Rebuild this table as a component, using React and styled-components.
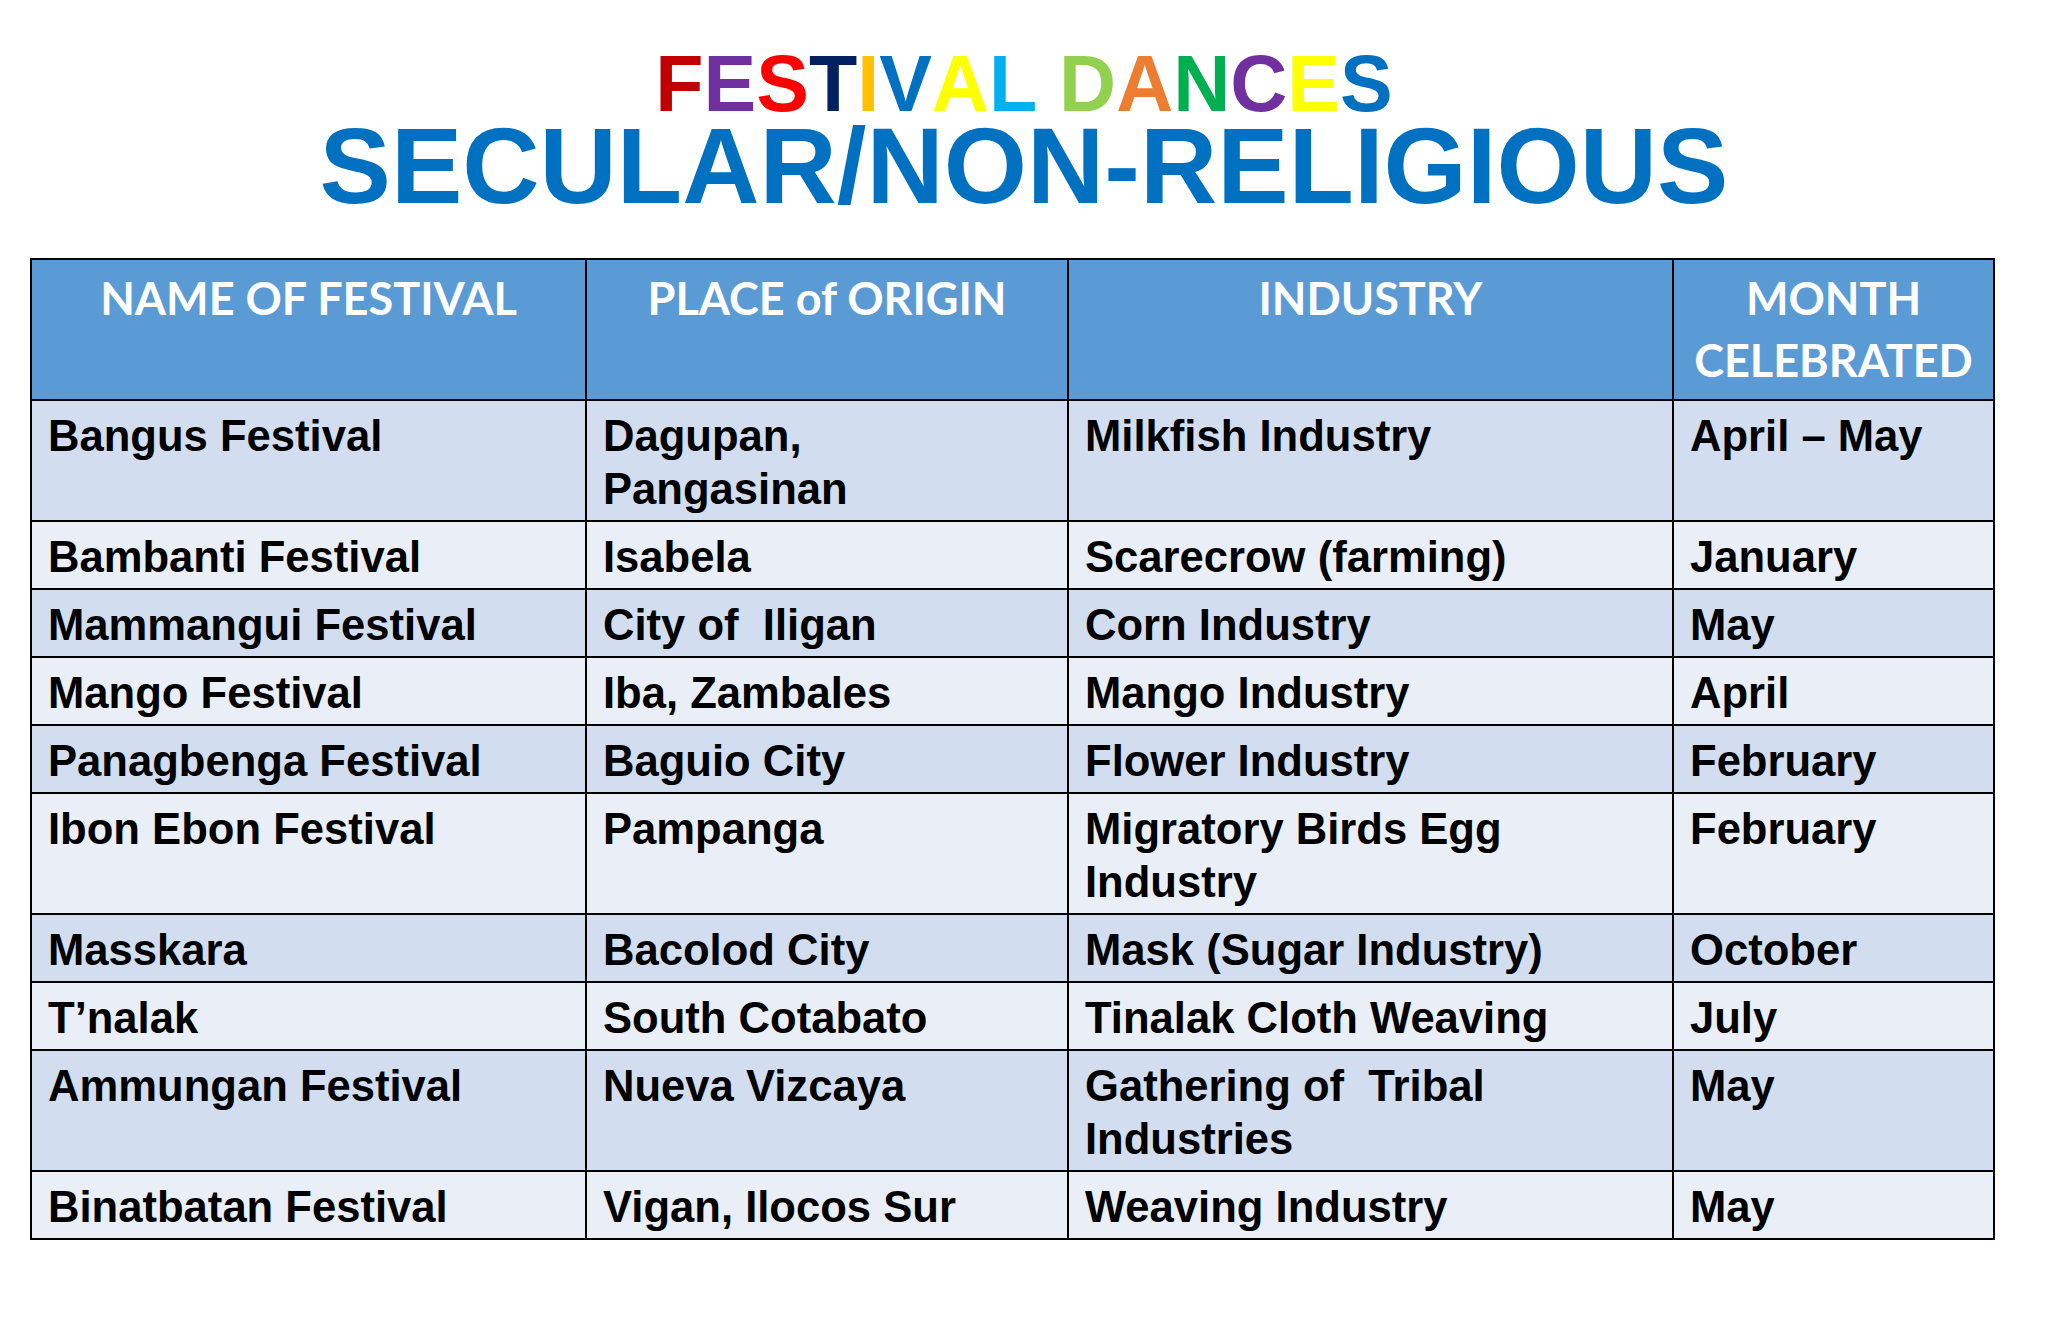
import { createGlobalStyle, styled } from 'styled-components';

// letters of the rainbow title, one colour each
const titleLetters = [
  ['F', '#c00000'],
  ['E', '#7030a0'],
  ['S', '#ff0000'],
  ['T', '#002060'],
  ['I', '#ffc000'],
  ['V', '#0070c0'],
  ['A', '#ffff00'],
  ['L', '#00b0f0'],
  [' ', 'transparent'],
  ['D', '#92d050'],
  ['A', '#ed7d31'],
  ['N', '#00b050'],
  ['C', '#7030a0'],
  ['E', '#ffff00'],
  ['S', '#0070c0'],
];

const columns = [
  { label: 'NAME OF FESTIVAL', width: 555 },
  { label: 'PLACE of ORIGIN', width: 482 },
  { label: 'INDUSTRY', width: 605 },
  { label: 'MONTH CELEBRATED', width: 321 },
];

const festivals = [
  ['Bangus Festival', 'Dagupan, Pangasinan', 'Milkfish Industry', 'April – May'],
  ['Bambanti Festival', 'Isabela', 'Scarecrow (farming)', 'January'],
  ['Mammangui Festival', 'City of  Iligan', 'Corn Industry', 'May'],
  ['Mango Festival', 'Iba, Zambales', 'Mango Industry', 'April'],
  ['Panagbenga Festival', 'Baguio City', 'Flower Industry', 'February'],
  ['Ibon Ebon Festival', 'Pampanga', 'Migratory Birds Egg Industry', 'February'],
  ['Masskara', 'Bacolod City', 'Mask (Sugar Industry)', 'October'],
  ['T’nalak', 'South Cotabato', 'Tinalak Cloth Weaving', 'July'],
  ['Ammungan Festival', 'Nueva Vizcaya', 'Gathering of  Tribal Industries', 'May'],
  ['Binatbatan Festival', 'Vigan, Ilocos Sur', 'Weaving Industry', 'May'],
];

const App = () => {
  return (
    <>
      <GlobalStyle />
      <Page>
        <Heading>
          <RainbowTitle>
            {titleLetters.map(([ch, color], idx) => (
              <Letter key={idx} $color={color}>
                {ch}
              </Letter>
            ))}
          </RainbowTitle>
          <SubTitle>SECULAR/NON-RELIGIOUS</SubTitle>
        </Heading>

        <TableWrap>
          <Table>
            <colgroup>
              {columns.map((col) => (
                <Col key={col.label} $width={col.width} />
              ))}
            </colgroup>
            <thead>
              <tr>
                {columns.map((col) => (
                  <HeadCell key={col.label}>{col.label}</HeadCell>
                ))}
              </tr>
            </thead>
            <tbody>
              {festivals.map((row, idx) => (
                <Row key={row[0]} $odd={idx % 2 === 0}>
                  {row.map((text, i) => (
                    <Cell key={i}>{text}</Cell>
                  ))}
                </Row>
              ))}
            </tbody>
          </Table>
        </TableWrap>
      </Page>
    </>
  );
};

const GlobalStyle = createGlobalStyle`
  body {
    margin: 0;
    background-color: #ffffff;
  }
`;

const Page = styled.div`
  width: 2048px;
  min-height: 1339px;
  box-sizing: border-box;
  padding-top: 52px;
  background-color: #ffffff;
`;

const Heading = styled.div`
  display: flex;
  flex-direction: column;
  align-items: center;
  font-family: 'Liberation Sans', Arial, sans-serif;
  font-weight: bold;
  margin-bottom: 42px;
`;

const RainbowTitle = styled.div`
  display: flex;
  justify-content: center;
  font-size: 79px;
  line-height: 64px;
  height: 64px;
  overflow: visible;
  white-space: pre;
`;

const Letter = styled.span`
  display: block;
  height: 64px;
  color: ${(props) => props.$color};
`;

const SubTitle = styled.div`
  font-size: 107px;
  line-height: 100px;
  color: #0070c0;
`;

const TableWrap = styled.div`
  padding-left: 30px;
`;

const Table = styled.table`
  width: 1963px;
  table-layout: fixed;
  border-collapse: collapse;
  border: 2px solid #000000;
`;

const Col = styled.col`
  width: ${(props) => props.$width}px;
`;

const HeadCell = styled.th`
  font-family: Lato, 'Open Sans', sans-serif;
  font-weight: bold;
  font-size: 45px;
  line-height: 62px;
  color: #ffffff;
  background-color: #5b9bd5;
  border: 2px solid #000000;
  padding: 7px 16px 8px;
  text-align: center;
  vertical-align: top;
`;

const Row = styled.tr`
  background-color: ${(props) => (props.$odd ? '#d2deef' : '#eaeff7')};
`;

const Cell = styled.td`
  font-family: 'Liberation Sans', Arial, sans-serif;
  font-weight: bold;
  font-size: 43.6px;
  line-height: 53px;
  color: #000000;
  border: 2px solid #000000;
  padding: 9px 16px 4px;
  vertical-align: top;
  white-space: pre-wrap;
`;

export default App;
